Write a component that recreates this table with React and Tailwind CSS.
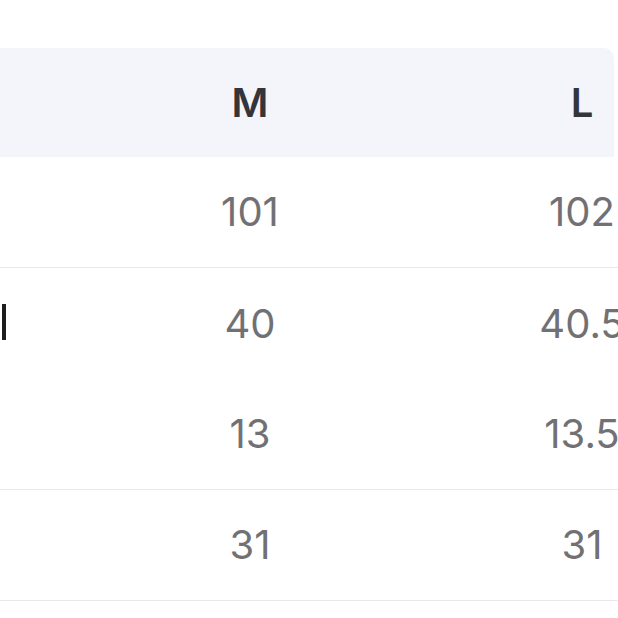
export default function App() {
    const rows = [
        { m: '101', l: '102', border: true },
        { m: '40', l: '40.5', border: false, mark: true },
        { m: '13', l: '13.5', border: true },
        { m: '31', l: '31', border: true },
    ];

    return (
        <div className="w-[618px] h-[618px] bg-white overflow-hidden font-['Inter',sans-serif]">
            <div className="pt-[48px] w-[618px]">
                {/* Header */}
                <div className="flex h-[109px] w-[614px] items-center bg-[#f4f5fa] rounded-tr-[10px] text-[#34343b] text-[40px] font-semibold overflow-visible">
                    <div className="w-[84px] shrink-0" />
                    <div className="w-[332px] shrink-0 text-center">M</div>
                    <div className="w-[332px] shrink-0 text-center">L</div>
                </div>

                {/* Rows */}
                {rows.map((r, i) => (
                    <div
                        key={i}
                        className={`flex h-[111px] items-center text-[40px] text-[#717175] whitespace-nowrap ${r.border ? 'border-b border-[#e9e9eb]' : ''}`}
                    >
                        <div className="w-[84px] shrink-0 flex items-center">
                            {r.mark && <span className="ml-[2px] mb-[4px] block w-[4px] h-[36px] bg-[#1d1d20]" />}
                        </div>
                        <div className="w-[332px] shrink-0 text-center">{r.m}</div>
                        <div className="w-[332px] shrink-0 text-center">{r.l}</div>
                    </div>
                ))}
            </div>
        </div>
    );
}
